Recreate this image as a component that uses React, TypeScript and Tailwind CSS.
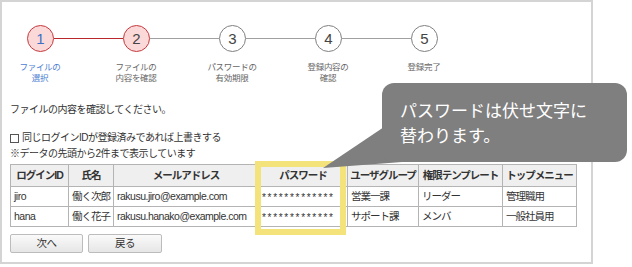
const steps = [
  { n: 1, lines: ['ファイルの', '選択'], done: true, link: true },
  { n: 2, lines: ['ファイルの', '内容を確認'], done: true, link: false },
  { n: 3, lines: ['パスワードの', '有効期限'], done: false, link: false },
  { n: 4, lines: ['登録内容の', '確認'], done: false, link: false },
  { n: 5, lines: ['登録完了'], done: false, link: false },
];

const headers = ['ログインID', '氏名', 'メールアドレス', 'パスワード', 'ユーザグループ', '権限テンプレート', 'トップメニュー'];
const widths = [58, 45, 145, 89, 71, 84, 74];

const rows = [
  ['jiro', '働く次郎', 'rakusu.jiro@example.com', '*************', '営業一課', 'リーダー', '管理職用'],
  ['hana', '働く花子', 'rakusu.hanako@example.com', '*************', 'サポート課', 'メンバ', '一般社員用'],
];

function Stepper() {
  return (
    <div className="pt-[23px]">
      <div className="flex items-center ml-[25px]">
        {steps.map((s, i) => (
          <div key={s.n} className="flex items-center">
            <div
              className={
                s.done
                  ? 'w-[27px] h-[27px] rounded-full border-[1.5px] border-[#c53a3e] bg-[#fcd9d9] flex items-center justify-center text-[15px] leading-none'
                  : 'w-[27px] h-[27px] rounded-full border border-[#808080] bg-white flex items-center justify-center text-[15px] leading-none'
              }
            >
              <span className={s.link ? 'text-[#3d6fc6]' : 'text-[#444]'}>{s.n}</span>
            </div>
            {i < steps.length - 1 && (
              <div className={i === 0 ? 'w-[69px] h-[1.5px] bg-[#b8282d]' : 'w-[69px] h-px bg-[#a0a0a0]'} />
            )}
          </div>
        ))}
      </div>
      <div className="flex gap-[20px] mt-[10px]">
        {steps.map((s) => (
          <div
            key={s.n}
            className={
              'w-[76px] text-center text-[8.5px] leading-[11px] tracking-[-0.3px] ' +
              (s.link ? 'text-[#4b7ed2]' : 'text-[#666]')
            }
          >
            {s.lines.map((l) => (
              <div key={l}>{l}</div>
            ))}
          </div>
        ))}
      </div>
    </div>
  );
}

function DataTable() {
  return (
    <table className="table-fixed border-collapse text-[#333] mt-[3px]" style={{ width: 566 }}>
      <colgroup>
        {widths.map((w, i) => (
          <col key={i} style={{ width: w }} />
        ))}
      </colgroup>
      <thead>
        <tr className="h-[22px] bg-[#efefef]">
          {headers.map((h) => (
            <th
              key={h}
              className="border border-[#b4b4b4] font-bold text-[10.5px] tracking-[-1px] whitespace-nowrap text-center px-0"
            >
              {h}
            </th>
          ))}
        </tr>
      </thead>
      <tbody>
        {rows.map((r) => (
          <tr key={r[0]} className="h-[20px]">
            {r.map((c, i) => (
              <td
                key={i}
                className={
                  'border border-[#b4b4b4] px-[3px] whitespace-nowrap overflow-visible ' +
                  (i === 0 || i === 2
                    ? 'text-[10.5px]'
                    : i === 3
                    ? 'text-[10px] tracking-[1.7px] align-top pt-[3px]'
                    : 'text-[10.5px] tracking-[-1px]')
                }
              >
                {c}
              </td>
            ))}
          </tr>
        ))}
      </tbody>
    </table>
  );
}

export default function App() {
  return (
    <div className="relative w-[632px] h-[267px] bg-white overflow-hidden font-[Liberation_Sans,Noto_Sans_CJK_JP,sans-serif]">
      <div className="w-[593px] h-[264px] border-2 border-[#d4d4d4]">
        <Stepper />
        <div className="px-[8px] pt-[19px] text-[10px] text-[#333] tracking-[-0.5px]">
          <div className="leading-[14px]">ファイルの内容を確認してください。</div>
          <label className="flex items-center gap-[3px] mt-[14px] leading-[14px]">
            <span className="w-[9px] h-[9px] border border-[#555] bg-white" />
            <span>同じログインIDが登録済みであれば上書きする</span>
          </label>
          <div className="mt-[2px] leading-[14px]">※データの先頭から2件まで表示しています</div>
          <DataTable />
          <div className="flex gap-[5px] mt-[7px]">
            <button className="w-[73px] h-[19px] rounded-[2px] border border-[#bcbcbc] bg-gradient-to-b from-[#fafafa] to-[#e6e6e6] text-[10.5px] text-[#333]">
              次へ
            </button>
            <button className="w-[74px] h-[19px] rounded-[2px] border border-[#bcbcbc] bg-gradient-to-b from-[#fafafa] to-[#e6e6e6] text-[10.5px] text-[#333]">
              戻る
            </button>
          </div>
        </div>
      </div>

      {/* highlight around password column */}
      <div className="absolute left-[255px] top-[161px] w-[91px] h-[74px] border-[6px] border-[#f4e27a]" />

      {/* callout */}
      <svg className="absolute left-0 top-0" width="632" height="267">
        <polygon points="323,168 384,127 402,162" fill="#7f7f7f" />
      </svg>
      <div className="absolute left-[382px] top-[83px] w-[245px] h-[79px] rounded-[12px] bg-[#7f7f7f] pl-[18px] pt-[16px] text-white text-[17px] leading-[25px]">
        <div>パスワードは伏せ文字に</div>
        <div>替わります。</div>
      </div>
    </div>
  );
}
